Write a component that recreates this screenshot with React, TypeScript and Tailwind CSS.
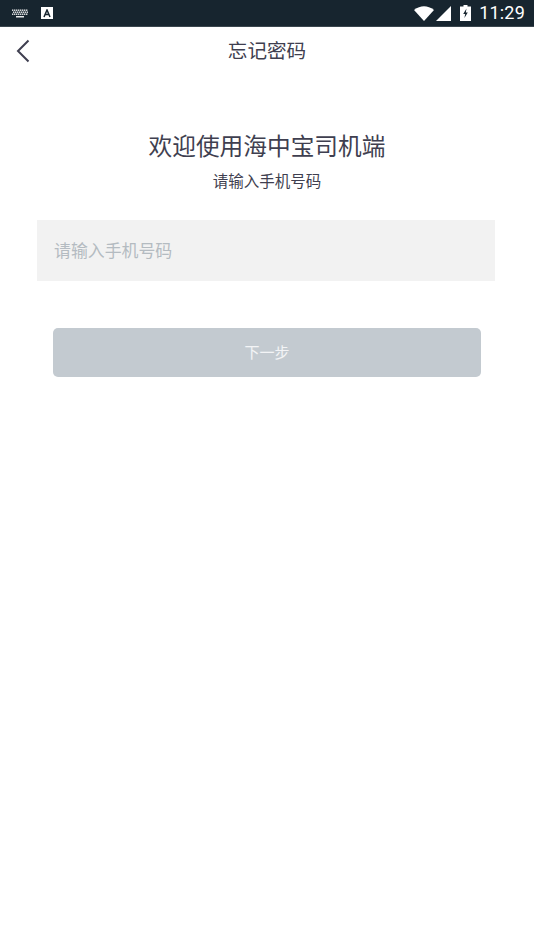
const font = { fontFamily: '"Noto Sans CJK SC", sans-serif' };

function KeyboardIcon() {
  const rows = [
    { y: 0.5, xs: [0, 2, 4, 6, 8, 10, 12, 14] },
    { y: 2.5, xs: [1, 3, 5, 7, 9, 11, 13, 15] },
    { y: 4.5, xs: [0, 2, 4, 6, 8, 10, 12, 14] },
  ];
  return (
    <svg width="16" height="9" viewBox="0 0 16 9" className="mr-[13px]">
      {rows.map((row) =>
        row.xs.map((x) => <rect key={`${row.y}-${x}`} x={x} y={row.y} width="1.4" height="1.4" fill="#e8eaeb" />)
      )}
      <rect x="4" y="7" width="8" height="1.5" fill="#e8eaeb" />
    </svg>
  );
}

function StatusBar() {
  return (
    <div className="h-[27px] bg-[#17252f] border-b border-[#3a464e] flex items-center pl-3 pr-[9px] text-white">
      <KeyboardIcon />
      <div className="w-3 h-3 bg-white flex items-center justify-center">
        <svg width="8" height="9" viewBox="0 0 8 9">
          <path d="M1 8 L4 1 L7 8 M2.2 5.6 H5.8" stroke="#17252f" strokeWidth="1.5" fill="none" />
        </svg>
      </div>
      <div className="flex-1" />
      <svg width="20" height="15" viewBox="0 0 20 15" className="mr-[2px]">
        <path d="M0 4 Q10 -3.5 20 4 L10 15 Z" fill="#fff" />
      </svg>
      <svg width="15" height="15" viewBox="0 0 15 15" className="mr-[9px]">
        <path d="M0 15 L15 0 V15 Z" fill="#fff" />
      </svg>
      <svg width="11" height="16" viewBox="0 0 11 16" className="mr-[8px]">
        <path d="M3.5 0 H7.5 V1.5 H11 V16 H0 V1.5 H3.5 Z" fill="#fff" />
        <path d="M6.5 3.5 L3.2 9 H5.2 L4.4 13 L7.8 7.5 H5.8 Z" fill="#17252f" />
      </svg>
      <span className="text-[18px] leading-none tracking-[0.2px]" style={{ fontFamily: "Roboto, sans-serif" }}>
        11:29
      </span>
    </div>
  );
}

export default function App() {
  return (
    <div className="min-h-[950px] bg-white" style={font}>
      <StatusBar />

      <div className="relative h-[49px] flex items-center justify-center">
        <svg width="14" height="24" viewBox="0 0 14 24" className="absolute left-[16px] top-[12px]">
          <path d="M12.5 1.5 L2 12 L12.5 22.5" stroke="#3f3f50" strokeWidth="2" fill="none" />
        </svg>
        <span className="text-[19.6px] leading-none text-[#3f3f50] -mt-1">忘记密码</span>
      </div>

      <div className="flex flex-col items-center pt-[54px]">
        <h1 className="text-[23.7px] leading-[30px] font-normal text-[#3f3f50]">欢迎使用海中宝司机端</h1>
        <p className="mt-[10px] text-[15.5px] leading-[20px] text-[#3f3f50]">请输入手机号码</p>
      </div>

      <div className="ml-[37px] mr-[39px] mt-[30px] h-[61px] bg-[#f2f2f2] flex items-center pl-[17px] pb-[2px] text-[16.9px] text-[#b4bbc1]">
        请输入手机号码
      </div>

      <div className="ml-[53px] mr-[53px] mt-[47px] h-[49px] rounded-[5px] bg-[#c3cad0] flex items-center justify-center text-[15px] text-white/80">
        下一步
      </div>
    </div>
  );
}
